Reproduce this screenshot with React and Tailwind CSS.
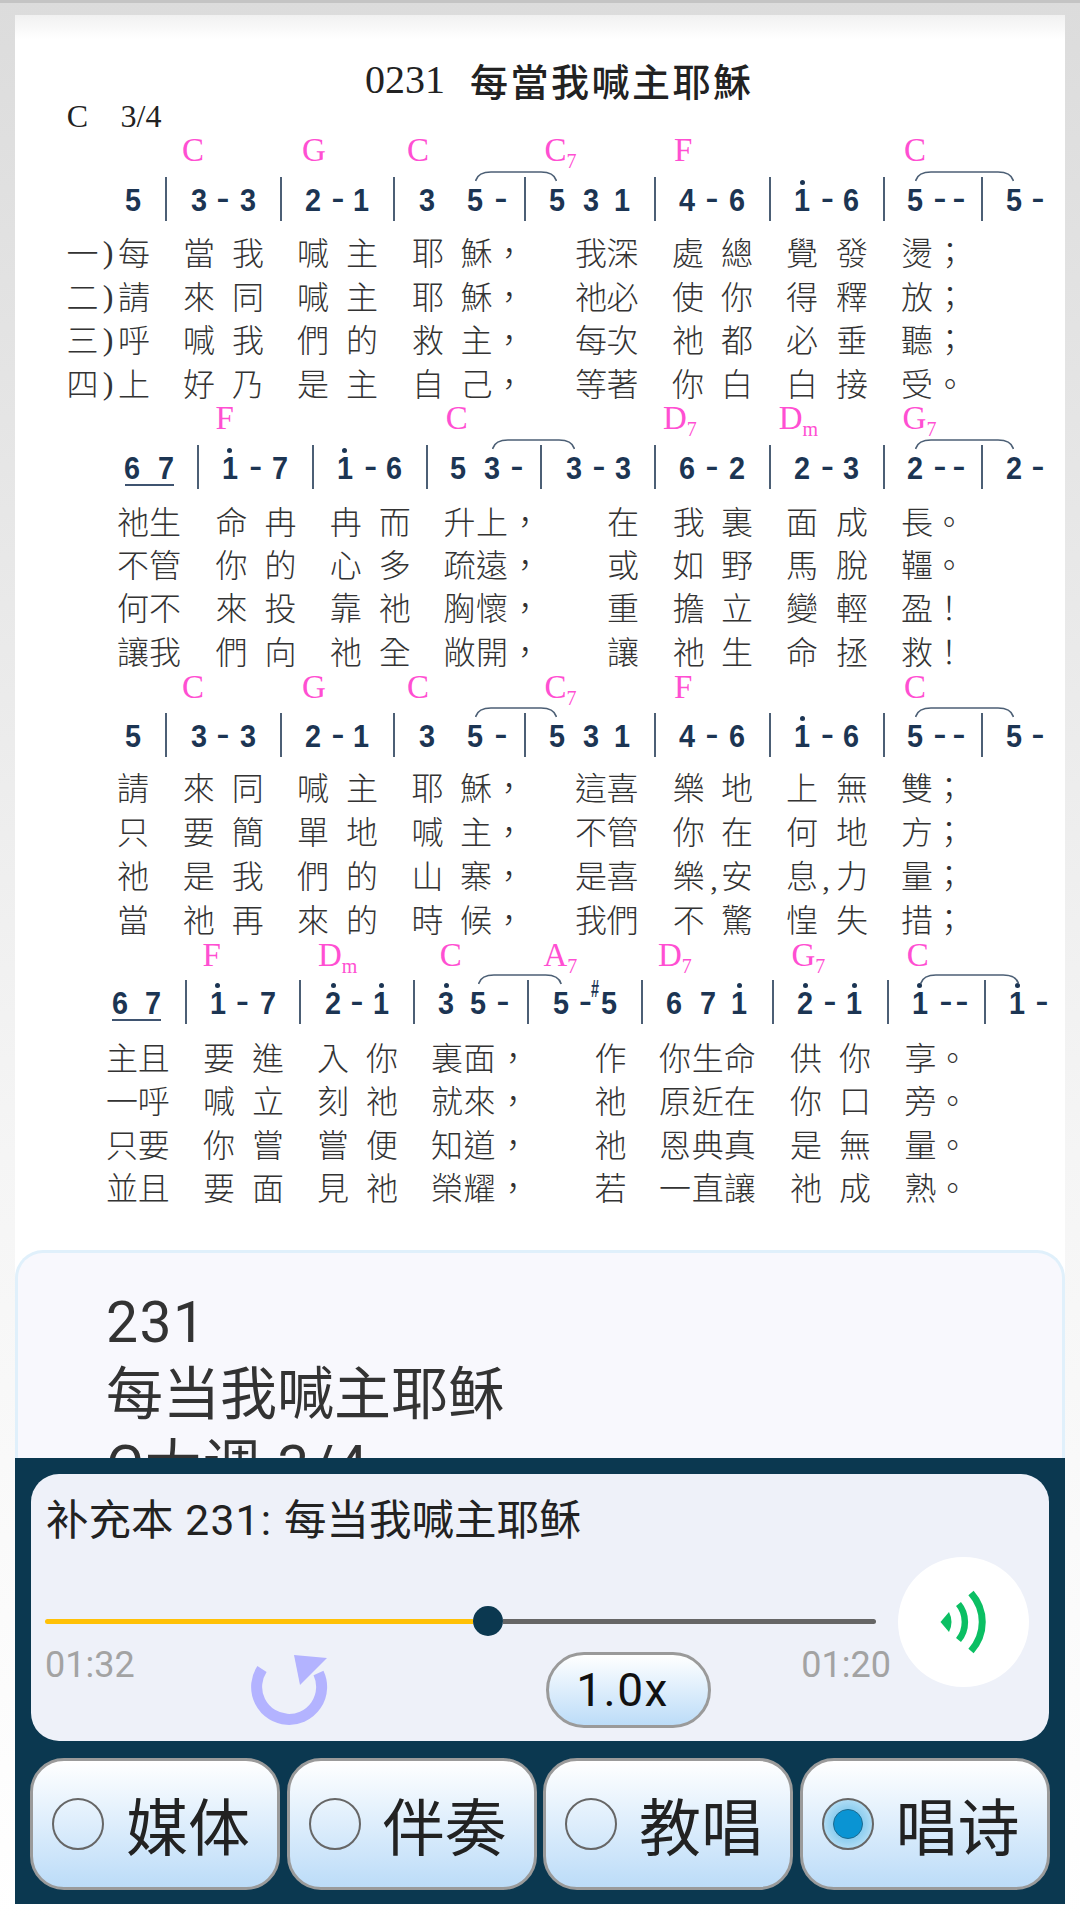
import React from "react";

const OX = 15;
const OY = 15;

const systems = [
  {
    chordY: 150,
    noteY: 200,
    chords: [
      ["C", "", 193],
      ["G", "", 314],
      ["C", "", 418],
      ["C", "7", 555.5],
      ["F", "", 683],
      ["C", "", 915],
    ],
    notes:
      "5:132.6 |:165.6 3:198.7 -:223 3:248 |:280.6 2:313 -:338 1:361 |:394 3:427 5:475 -:501 |:525 5:556.5 3:590.6 1:621.6 |:655 4:687 -:712 6:737 |:770 1.:802 -:827.5 6:851 |:883.7 5:915 -:940 -:959 |:982 5:1013.5 -:1038",
    slurs: [
      [475, 557],
      [915, 1014],
    ],
    lyricY: [254, 298, 341, 385],
    cols: [134, 199, 248, 313, 362, 428, 476.6, 509, 591, 622.6, 688, 737, 802, 852, 917, 950],
    lines: [
      "每當我喊主耶穌，我深處總覺發燙；",
      "請來同喊主耶穌，祂必使你得釋放；",
      "呼喊我們的救主，每次祂都必垂聽；",
      "上好乃是主自己，等著你白白接受。",
    ],
  },
  {
    chordY: 418,
    noteY: 468,
    chords: [
      ["F", "", 224.6],
      ["C", "", 456.7],
      ["D", "7", 675],
      ["D", "m", 790.7],
      ["G", "7", 914.6],
    ],
    notes:
      "6:132 7:166 |:198.4 1.:229.8 -:255.6 7:280 |:313.4 1.:344.8 -:370.6 6:394 |:427 5:458.4 3:492 -:517 |:541.4 3:574.4 -:599 3:622.6 |:655 6:687 -:712 2:737 |:770 2:802 -:827.5 3:851 |:883.7 2:915 -:940 -:959 |:982 2:1013.5 -:1038",
    underline: [125.4, 173.6],
    slurs: [
      [492, 575],
      [915, 1014],
    ],
    lyricY: [523, 566, 609, 653],
    cols: [133, 165, 231.5, 280.4, 345.8, 394.7, 459.4, 492, 525, 623, 688.8, 737, 802, 852, 917, 949],
    lines: [
      "祂生命冉冉而升上，在我裏面成長。",
      "不管你的心多疏遠，或如野馬脫韁。",
      "何不來投靠祂胸懷，重擔立變輕盈！",
      "讓我們向祂全敞開，讓祂生命拯救！",
    ],
  },
  {
    chordY: 687,
    noteY: 736,
    chords: [
      ["C", "", 193],
      ["G", "", 314],
      ["C", "", 418],
      ["C", "7", 555.5],
      ["F", "", 683],
      ["C", "", 915],
    ],
    notes:
      "5:132.6 |:165.6 3:198.7 -:223 3:248 |:280.6 2:313 -:338 1:361 |:394 3:427 5:475 -:501 |:525 5:556.5 3:590.6 1:621.6 |:655 4:687 -:712 6:737 |:770 1.:802 -:827.5 6:851 |:883.7 5:915 -:940 -:959 |:982 5:1013.5 -:1038",
    slurs: [
      [475, 557],
      [915, 1014],
    ],
    lyricY: [789, 833, 877, 921],
    cols: [133, 198.8, 247.7, 313, 362, 427.4, 476, 508.7, 591, 622.6, 688.8, 737, 802, 852, 917, 949],
    lines: [
      "請來同喊主耶穌，這喜樂地上無雙；",
      "只要簡單地喊主，不管你在何地方；",
      "祂是我們的山寨，是喜樂安息力量；",
      "當祂再來的時候，我們不驚惶失措；",
    ],
    extra: [
      [",", 714, 880],
      [",", 826, 880],
    ],
  },
  {
    chordY: 955,
    noteY: 1003,
    chords: [
      ["F", "", 211.5],
      ["D", "m", 330],
      ["C", "", 450.8],
      ["A", "7", 555.5],
      ["D", "7", 670],
      ["G", "7", 803.4],
      ["C", "", 917.8],
    ],
    notes:
      "6:119.6 7:153 |:185.7 1.:217.7 -:242.5 7:267.6 |:300 2.:333 -:357 1.:381 |:414 3.:446.4 5:477.7 -:503 |:528 5:560.6 -:585.5 5:608.9 |:642 6:674 7:707.7 1.:739 |:773 2.:805 -:830 1.:854 |:887.8 1.:919.5 -:946 -:962 |:985 1.:1017 -:1042",
    underline: [111.6, 161],
    sharp: [594.7, 988.5],
    slurs: [
      [478, 561.7],
      [919.5, 1018.7],
    ],
    lyricY: [1059, 1102, 1146, 1189],
    cols: [122, 153.7, 219, 268, 333, 382, 447, 479.4, 513, 610.6, 675, 707.7, 739.7, 806, 855, 920.5, 952.5],
    lines: [
      "主且要進入你裏面，作你生命供你享。",
      "一呼喊立刻祂就來，祂原近在你口旁。",
      "只要你嘗嘗便知道，祂恩典真是無量。",
      "並且要面見祂榮耀，若一直讓祂成熟。",
    ],
  },
];

const prefixes = [
  ["一", 82.6, 254],
  [")", 108, 252],
  ["二", 82.6, 298],
  [")", 108, 296],
  ["三", 82.6, 341],
  [")", 108, 339],
  ["四", 82.6, 385],
  [")", 108, 383],
];

const halfWidth = { C: 11, G: 12, D: 12, A: 12, F: 9 };

const lyricFont = "[font-family:'Liberation_Serif','Noto_Sans_CJK_TC',serif]";

function At({ x, y, className, children }) {
  return (
    <span
      className={`absolute -translate-x-1/2 -translate-y-1/2 leading-none whitespace-nowrap ${className}`}
      style={{ left: x - OX, top: y - OY }}
    >
      {children}
    </span>
  );
}

function Chord({ name, sub, x, y }) {
  return (
    <span
      className="absolute -translate-y-1/2 leading-none whitespace-nowrap text-[33px] text-[#ff4fd2] [font-family:'Liberation_Serif',serif]"
      style={{ left: x - OX - halfWidth[name], top: y - OY }}
    >
      {name}
      {sub ? <span className="relative top-[7px] text-[20px]">{sub}</span> : null}
    </span>
  );
}

function Note({ token, y }) {
  const [raw, xs] = token.split(":");
  const x = parseFloat(xs);
  if (raw === "|") {
    return (
      <div
        className="absolute w-[2px] h-[44px] bg-[#4c5f75]"
        style={{ left: x - OX - 1, top: y - 23 - OY }}
      />
    );
  }
  if (raw === "-") {
    return (
      <At x={x} y={y - 3} className="text-[40px] text-[#1c3553] [font-family:'Liberation_Sans',sans-serif]">
        -
      </At>
    );
  }
  const dotted = raw.endsWith(".");
  const ch = raw.replace(".", "");
  return (
    <>
      <At x={x} y={y} className="scale-x-[0.9] text-[32px] font-bold text-[#1c3553] [font-family:'Liberation_Sans',sans-serif]">
        {ch}
      </At>
      {dotted ? (
        <div
          className="absolute w-[5px] h-[5px] rounded-full bg-[#1c3553]"
          style={{ left: x - OX - 2.5, top: y - 20 - OY }}
        />
      ) : null}
    </>
  );
}

function Slur({ x1, x2, y }) {
  const w = x2 - x1;
  return (
    <svg
      className="absolute"
      style={{ left: x1 - OX, top: y - 30 - OY }}
      width={w}
      height={14}
      viewBox={`0 0 ${w} 14`}
      fill="none"
    >
      <path
        d={`M0.5 11 Q3 2 16 2 L${w - 16} 2 Q${w - 3} 2 ${w - 0.5} 11`}
        stroke="#4c5f75"
        strokeWidth="1.6"
      />
    </svg>
  );
}

function System({ s }) {
  return (
    <>
      {s.chords.map(([n, sub, x], i) => (
        <Chord key={i} name={n} sub={sub} x={x} y={s.chordY} />
      ))}
      {s.notes.split(" ").map((t, i) => (
        <Note key={i} token={t} y={s.noteY} />
      ))}
      {s.slurs.map(([a, b], i) => (
        <Slur key={i} x1={a} x2={b} y={s.noteY} />
      ))}
      {s.underline ? (
        <div
          className="absolute h-[2px] bg-[#3f5470]"
          style={{ left: s.underline[0] - OX, width: s.underline[1] - s.underline[0], top: s.noteY + 16 - OY }}
        />
      ) : null}
      {s.sharp ? (
        <At x={s.sharp[0]} y={s.sharp[1]} className="scale-x-[0.6] text-[24px] font-bold text-[#1c3553] [font-family:'Liberation_Sans',sans-serif]">
          #
        </At>
      ) : null}
      {s.lines.map((line, r) =>
        Array.from(line).map((c, i) => (
          <At key={`${r}-${i}`} x={s.cols[i]} y={s.lyricY[r]} className={`text-[32px] font-light text-[#333333] ${lyricFont}`}>
            {c}
          </At>
        ))
      )}
      {s.extra
        ? s.extra.map(([c, x, y], i) => (
            <At key={i} x={x} y={y} className="text-[30px] text-[#333333] [font-family:'Liberation_Serif',serif]">
              {c}
            </At>
          ))
        : null}
    </>
  );
}

function Radio({ on }) {
  if (on) {
    return (
      <span className="w-[52px] h-[52px] rounded-full border-2 border-[#666666] bg-[radial-gradient(circle,#58b6e6_0%,#d3ecfb_100%)] flex items-center justify-center shrink-0">
        <span className="w-[30px] h-[30px] rounded-full bg-[#0a94d3] border border-[#1d6a8f]" />
      </span>
    );
  }
  return <span className="w-[52px] h-[52px] rounded-full border-2 border-[#666666] shrink-0" />;
}

function ModeButton({ label, on }) {
  return (
    <div className="w-[250px] h-[132px] rounded-[34px] border-[3px] border-[#9a9a9a] bg-linear-to-b from-white to-[#bcdcf8] flex items-center pl-[19px] gap-[22px]">
      <Radio on={on} />
      <span className="text-[62px] leading-none text-[#222222] [font-family:'Noto_Sans_CJK_SC',sans-serif]">{label}</span>
    </div>
  );
}

export default function App() {
  return (
    <div className="w-[1080px] h-[1920px] overflow-hidden bg-linear-to-b from-[#dcdcdc] via-[#f5f5f5] via-[60%] to-white [font-family:'Roboto','Noto_Sans_CJK_SC',sans-serif]">
      <div className="h-[3px] bg-[#c4c4c4]" />
      <div className="h-[12px]" />
      <div className="mx-[15px] w-[1050px] bg-white">
        {/* scanned score: every glyph's place on the page is the content itself */}
        <div className="relative h-[1235px] bg-[linear-gradient(to_bottom,#f1f1f1,#ffffff_24px)]">
          <div
            className="absolute -translate-y-1/2 leading-none whitespace-nowrap flex items-center text-[#222222]"
            style={{ left: 365 - OX, top: 80 - OY }}
          >
            <span className="text-[40px] [font-family:'Liberation_Serif',serif]">0231</span>
            <span className="ml-[25px] text-[38px] tracking-[2.5px] font-medium [font-family:'Noto_Sans_CJK_TC',sans-serif]">每當我喊主耶穌</span>
          </div>
          <At x={77.5} y={116} className="text-[32px] text-[#222222] [font-family:'Liberation_Serif',serif]">C</At>
          <At x={141} y={116} className="text-[32px] text-[#222222] [font-family:'Liberation_Serif',serif]">3/4</At>
          {prefixes.map(([c, x, y], i) => (
            <At key={i} x={x} y={y} className={`text-[32px] font-light text-[#333333] ${lyricFont}`}>
              {c}
            </At>
          ))}
          {systems.map((s, i) => (
            <System key={i} s={s} />
          ))}
        </div>

        <div className="h-[208px] overflow-hidden rounded-t-[28px] border-[3px] border-b-0 border-[#e0f0fb] bg-[#f8f8fd] pl-[88px] pt-[34px] text-[57px] leading-[72px] text-[#333333]">
          <div className="tracking-[1.5px]">231</div>
          <div>每当我喊主耶稣</div>
          <div className="tracking-[1.5px]">C大调 3/4</div>
        </div>

        <div className="h-[446px] bg-[#0b3850] pt-[16px]">
          <div className="ml-[16px] w-[1018px] h-[267px] rounded-[28px] bg-[#eef1f9] pt-[19px]">
            <div className="pl-[15px] text-[42.5px] leading-[56px] text-[#222222]">
              补充本<span className="tracking-[1.25px]"> 231: </span>每当我喊主耶稣
            </div>
            <div className="mt-[8px] flex items-start justify-between pl-[14px] pr-[20px]">
              <div className="w-[846px] pt-[49px]">
                <div className="w-[831px] flex items-center h-[30px]">
                  <div className="w-[428px] h-[5px] rounded-l-full bg-[#ffc107]" />
                  <div className="w-[30px] h-[30px] rounded-full bg-[#0b3850] shrink-0" />
                  <div className="flex-1 h-[5px] rounded-r-full bg-[#666666]" />
                </div>
                <div className="flex items-start">
                  <div className="mt-[8px] w-[89px] text-[36px] leading-[42px] text-[#a3a3a3]">01:32</div>
                  <svg className="ml-[116px] mt-[17px]" width="78" height="74" viewBox="0 0 78 74" fill="none">
                    <path d="M12 16 A32.5 32.5 0 1 0 68.5 20" stroke="#b3b3ff" strokeWidth="11" />
                    <path d="M44 2 L77 5 L50 32 Z" fill="#b3b3ff" />
                  </svg>
                  <div className="ml-[218px] mt-[16px] w-[165px] h-[76px] rounded-[38px] border-[3px] border-[#9a9a9a] bg-linear-to-b from-white to-[#bcdcf8] flex items-center justify-center pr-[12px] text-[46px] tracking-[1.5px] leading-none text-[#111111]">
                    1.0x
                  </div>
                  <div className="ml-auto mt-[8px] text-[36px] leading-[42px] text-[#a3a3a3]">01:20</div>
                </div>
              </div>
              <div className="w-[131px] h-[130px] rounded-full bg-white flex items-center justify-center">
                <svg width="48" height="64" viewBox="0 0 48 64" fill="none">
                  <path d="M0.5 32 L9 22 Q14 32 9 42 Z" fill="#0bbf63" />
                  <path d="M18.5 14 C27 24 27 40 18.5 50" stroke="#0bbf63" strokeWidth="6.5" />
                  <path d="M31 3 C46 20 46 44 31 61" stroke="#0bbf63" strokeWidth="7" />
                </svg>
              </div>
            </div>
          </div>
          <div className="mt-[17px] px-[15px] flex gap-[6.5px]">
            <ModeButton label="媒体" />
            <ModeButton label="伴奏" />
            <ModeButton label="教唱" />
            <ModeButton label="唱诗" on />
          </div>
        </div>
      </div>
    </div>
  );
}
